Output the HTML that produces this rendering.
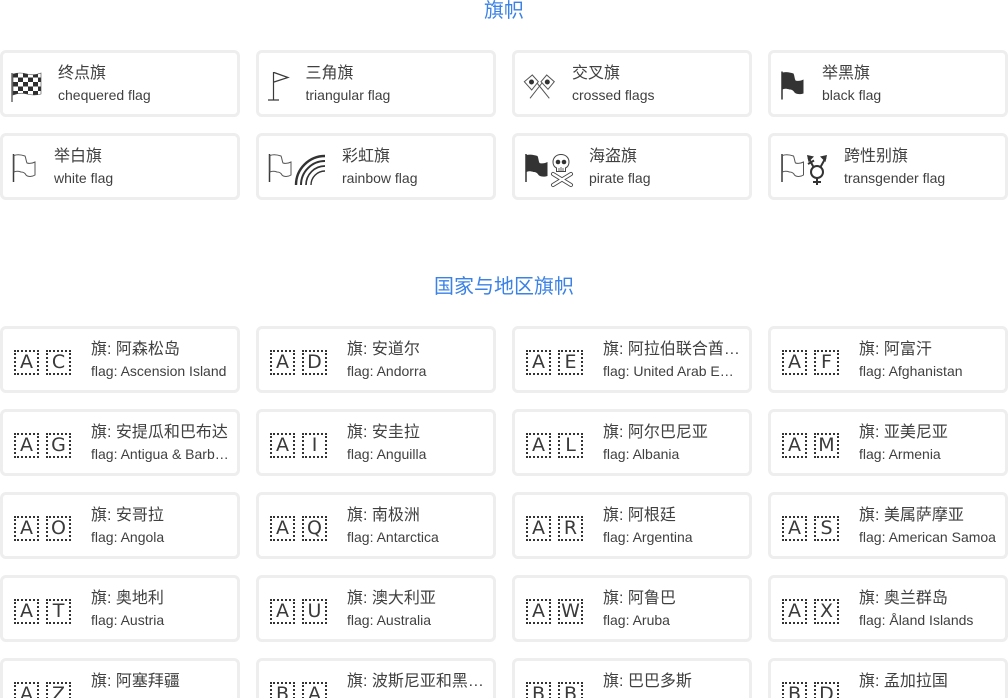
<!DOCTYPE html>
<html lang="zh"><head><meta charset="utf-8"><title>旗帜</title>
<style>
html,body{margin:0;padding:0;background:#fff;width:1008px;height:698px;overflow:hidden}
#p{position:absolute;left:0;top:0;width:1008px;height:698px;overflow:hidden;font-family:"Liberation Sans","Noto Sans CJK SC",sans-serif;color:#444}
h2{position:absolute;left:0;width:1008px;margin:0;text-align:center;font-weight:400;font-size:20px;line-height:28px;color:#3b82e6}
.c{position:absolute;width:240px;height:67px;box-sizing:border-box;border:3px solid #eee;border-radius:6px;background:#fff}
.c svg{position:absolute;left:-3px;top:-3px;width:240px;height:67px}
.t,.s{position:absolute;white-space:nowrap;overflow:hidden;text-overflow:ellipsis}
.t{top:10px;font-size:16px;line-height:22px;color:#404040}
.s{top:32px;font-size:14px;line-height:20px;color:#404040}
.n .t,.n .s{left:88px;width:139px}
.k{position:absolute;top:21px;width:25px;height:25px;box-sizing:border-box;border:2px dotted #333;text-align:center;font:19px/21px "DejaVu Sans",sans-serif;color:#3a3a3a}
.k.a{left:11px}.k.b{left:43px}
</style></head><body>
<div id="p">
<svg width="0" height="0" style="position:absolute">
<defs>
<pattern id="ch" patternUnits="userSpaceOnUse" x="13" y="23" width="10" height="9"><rect width="10" height="9" fill="#fff"/><rect width="5" height="4.500" fill="#2e2e2e"/><rect x="5" y="4.500" width="5" height="4.500" fill="#2e2e2e"/></pattern>
<g id="wf"><path d="M.5 0V28" stroke="#3a3a3a" stroke-width="1.500" fill="none"/><path d="M1 1.500C5 0 9 1 12 2C13 4 13 7 14 9C17 10 20 9 22 8V21C19 23 15 23 13 21C12 19 10 18 8 18C5 17 3 17 1 18Z" fill="none" stroke="#555" stroke-width="1"/></g>
<g id="bf"><path d="M.5 0V28" stroke="#333" stroke-width="1.500" fill="none"/><path d="M1 1C5 0 9 1 12 2C13 4 13 7 14 9C17 10 20 9 22 8V22C19 23 15 23 13 21C12 19 10 18 8 18C5 17 3 17 1 18Z" fill="#333"/><path d="M9 18.500Q11 19 12 21" stroke="#fff" fill="none" stroke-width=".8"/></g>
</defs></svg>

<h2 style="top:-3px">旗帜</h2>

<div class="c" style="left:0;top:50px"><svg viewBox="0 0 240 67"><path d="M12 23V52" stroke="#444" stroke-width="1.200"/><path d="M13 24Q20 22 27 24T41 23V44Q34 46 27 44T13 45Z" fill="url(#ch)" stroke="#444" stroke-width=".6"/></svg><div class="t" style="left:55px">终点旗</div><div class="s" style="left:55px">chequered flag</div></div>
<div class="c" style="left:256px;top:50px"><svg viewBox="0 0 240 67"><path d="M17.500 22V50M12 50H23M18 22.500L32 27.500 18 32" fill="none" stroke="#3a3a3a" stroke-width="1.200"/></svg><div class="t" style="left:46.500px">三角旗</div><div class="s" style="left:46.500px">triangular flag</div></div>
<div class="c" style="left:512px;top:50px"><svg viewBox="0 0 240 67"><path d="M12.300 31.700L20.300 25 26.300 31.700 19.700 40ZM29 31.700L34.700 25 42.300 31.700 36 39.300ZM18 48.300L30 33M37.300 48.300L25 33" fill="none" stroke="#555" stroke-width="1"/><circle cx="19.500" cy="32" r="2.500" fill="#333"/><circle cx="35.300" cy="32" r="2.500" fill="#333"/></svg><div class="t" style="left:57px">交叉旗</div><div class="s" style="left:57px">crossed flags</div></div>
<div class="c" style="left:768px;top:50px"><svg viewBox="0 0 240 67"><use href="#bf" x="13.500" y="21.500"/></svg><div class="t" style="left:51px">举黑旗</div><div class="s" style="left:51px">black flag</div></div>

<div class="c" style="left:0;top:133px"><svg viewBox="0 0 240 67"><use href="#wf" x="13" y="21"/></svg><div class="t" style="left:51px">举白旗</div><div class="s" style="left:51px">white flag</div></div>
<div class="c" style="left:256px;top:133px"><svg viewBox="0 0 240 67"><use href="#wf" x="13" y="21"/><g fill="none" stroke="#333"><path d="M40 52A29 29 0 0 1 69 23" stroke-width="2.400"/><path d="M45 52A24 24 0 0 1 69 28" stroke-width="2"/><path d="M50 52A19 19 0 0 1 69 33" stroke-width="1.700"/><path d="M55 52A14 14 0 0 1 69 38" stroke-width="1.400"/></g></svg><div class="t" style="left:83px">彩虹旗</div><div class="s" style="left:83px">rainbow flag</div></div>
<div class="c" style="left:512px;top:133px"><svg viewBox="0 0 240 67"><use href="#bf" x="13.500" y="21"/><path d="M49 21.500C44 21.500 41 25 41 29C41 32 42.500 34 44.500 35V38.500H53.500V35C55.500 34 57 32 57 29C57 25 54 21.500 49 21.500Z" fill="#fff" stroke="#444"/><circle cx="46" cy="29" r="2.300" fill="#333"/><circle cx="52" cy="29" r="2.300" fill="#333"/><path d="M47 35v3M49 34v4M51 35v3" stroke="#444" stroke-width=".8"/><path d="M41 41L59 52M59 41L41 52" stroke="#444" stroke-width="4" stroke-linecap="round"/><path d="M41 41L59 52M59 41L41 52" stroke="#fff" stroke-width="2.300" stroke-linecap="round"/></svg><div class="t" style="left:74px">海盗旗</div><div class="s" style="left:74px">pirate flag</div></div>
<div class="c" style="left:768px;top:133px"><svg viewBox="0 0 240 67"><use href="#wf" x="13.500" y="21"/><g fill="none" stroke="#333" stroke-width="2"><circle cx="49" cy="39" r="6"/><path d="M49 45V52M45 49H53M45.500 34L40.500 25M52.500 34L57.500 25M40 31L46 27.500"/></g><path d="M39 22L46 23.500 40.500 29ZM59 22L52 23.500 57.500 29Z" fill="#333"/></svg><div class="t" style="left:73px">跨性别旗</div><div class="s" style="left:73px">transgender flag</div></div>

<h2 style="top:273px">国家与地区旗帜</h2>

<div class="c n" style="left:0;top:326px"><span class="k a">A</span><span class="k b">C</span><div class="t">旗: 阿森松岛</div><div class="s">flag: Ascension Island</div></div>
<div class="c n" style="left:256px;top:326px"><span class="k a">A</span><span class="k b">D</span><div class="t">旗: 安道尔</div><div class="s">flag: Andorra</div></div>
<div class="c n" style="left:512px;top:326px"><span class="k a">A</span><span class="k b">E</span><div class="t">旗: 阿拉伯联合酋长国</div><div class="s">flag: United Arab Emirates</div></div>
<div class="c n" style="left:768px;top:326px"><span class="k a">A</span><span class="k b">F</span><div class="t">旗: 阿富汗</div><div class="s">flag: Afghanistan</div></div>

<div class="c n" style="left:0;top:409px"><span class="k a">A</span><span class="k b">G</span><div class="t">旗: 安提瓜和巴布达</div><div class="s">flag: Antigua &amp; Barbuda</div></div>
<div class="c n" style="left:256px;top:409px"><span class="k a">A</span><span class="k b">I</span><div class="t">旗: 安圭拉</div><div class="s">flag: Anguilla</div></div>
<div class="c n" style="left:512px;top:409px"><span class="k a">A</span><span class="k b">L</span><div class="t">旗: 阿尔巴尼亚</div><div class="s">flag: Albania</div></div>
<div class="c n" style="left:768px;top:409px"><span class="k a">A</span><span class="k b">M</span><div class="t">旗: 亚美尼亚</div><div class="s">flag: Armenia</div></div>

<div class="c n" style="left:0;top:492px"><span class="k a">A</span><span class="k b">O</span><div class="t">旗: 安哥拉</div><div class="s">flag: Angola</div></div>
<div class="c n" style="left:256px;top:492px"><span class="k a">A</span><span class="k b">Q</span><div class="t">旗: 南极洲</div><div class="s">flag: Antarctica</div></div>
<div class="c n" style="left:512px;top:492px"><span class="k a">A</span><span class="k b">R</span><div class="t">旗: 阿根廷</div><div class="s">flag: Argentina</div></div>
<div class="c n" style="left:768px;top:492px"><span class="k a">A</span><span class="k b">S</span><div class="t">旗: 美属萨摩亚</div><div class="s">flag: American Samoa</div></div>

<div class="c n" style="left:0;top:575px"><span class="k a">A</span><span class="k b">T</span><div class="t">旗: 奥地利</div><div class="s">flag: Austria</div></div>
<div class="c n" style="left:256px;top:575px"><span class="k a">A</span><span class="k b">U</span><div class="t">旗: 澳大利亚</div><div class="s">flag: Australia</div></div>
<div class="c n" style="left:512px;top:575px"><span class="k a">A</span><span class="k b">W</span><div class="t">旗: 阿鲁巴</div><div class="s">flag: Aruba</div></div>
<div class="c n" style="left:768px;top:575px"><span class="k a">A</span><span class="k b">X</span><div class="t">旗: 奥兰群岛</div><div class="s">flag: Åland Islands</div></div>

<div class="c n" style="left:0;top:658px"><span class="k a">A</span><span class="k b">Z</span><div class="t">旗: 阿塞拜疆</div><div class="s">flag: Azerbaijan</div></div>
<div class="c n" style="left:256px;top:658px"><span class="k a">B</span><span class="k b">A</span><div class="t">旗: 波斯尼亚和黑塞哥维那</div><div class="s">flag: Bosnia &amp; Herzegovina</div></div>
<div class="c n" style="left:512px;top:658px"><span class="k a">B</span><span class="k b">B</span><div class="t">旗: 巴巴多斯</div><div class="s">flag: Barbados</div></div>
<div class="c n" style="left:768px;top:658px"><span class="k a">B</span><span class="k b">D</span><div class="t">旗: 孟加拉国</div><div class="s">flag: Bangladesh</div></div>
</div>
</body></html>
